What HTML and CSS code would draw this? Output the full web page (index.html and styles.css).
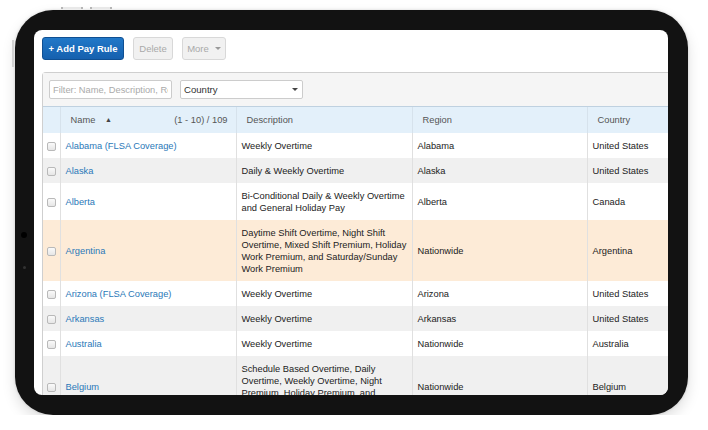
FILE: index.html
```html
<!DOCTYPE html>
<html lang="en">
<head>
<meta charset="utf-8">
<title>Pay Rules</title>
<link rel="stylesheet" href="styles.css">
</head>
<body>
<div class="frame">
  <span class="hw hw-top1"></span>
  <span class="hw hw-top2"></span>
  <span class="hw hw-side"></span>
  <span class="cam cam-lens"></span>
  <span class="cam cam-dot"></span>
  <div class="screen">
    <div class="toolbar">
      <button class="btn btn-primary">+ Add Pay Rule</button>
      <button class="btn btn-disabled btn-delete">Delete</button>
      <button class="btn btn-disabled btn-more">More <span class="caret"></span></button>
    </div>
    <div class="panel">
      <div class="filters">
        <input class="filter-input" type="text" placeholder="Filter: Name, Description, Region">
        <div class="select-wrap">
          <select class="filter-select"><option>Country</option></select>
        </div>
      </div>
      <table class="grid">
        <colgroup>
          <col class="c-check"><col class="c-name"><col class="c-desc"><col class="c-region"><col class="c-country">
        </colgroup>
        <thead>
          <tr>
            <th></th>
            <th><div class="name-head"><span>Name <span class="sort">▲</span></span><span class="count">(1 - 10) / 109</span></div></th>
            <th>Description</th>
            <th>Region</th>
            <th>Country</th>
          </tr>
        </thead>
        <tbody>
          <tr><td><span class="cb"></span></td><td><a href="#">Alabama (FLSA Coverage)</a></td><td>Weekly Overtime</td><td>Alabama</td><td>United States</td></tr>
          <tr class="alt"><td><span class="cb"></span></td><td><a href="#">Alaska</a></td><td>Daily &amp; Weekly Overtime</td><td>Alaska</td><td>United States</td></tr>
          <tr><td><span class="cb"></span></td><td><a href="#">Alberta</a></td><td>Bi-Conditional Daily &amp; Weekly Overtime and General Holiday Pay</td><td>Alberta</td><td>Canada</td></tr>
          <tr class="hl"><td><span class="cb"></span></td><td><a href="#">Argentina</a></td><td>Daytime Shift Overtime, Night Shift Overtime, Mixed Shift Premium, Holiday Work Premium, and Saturday/Sunday Work Premium</td><td>Nationwide</td><td>Argentina</td></tr>
          <tr><td><span class="cb"></span></td><td><a href="#">Arizona (FLSA Coverage)</a></td><td>Weekly Overtime</td><td>Arizona</td><td>United States</td></tr>
          <tr class="alt"><td><span class="cb"></span></td><td><a href="#">Arkansas</a></td><td>Weekly Overtime</td><td>Arkansas</td><td>United States</td></tr>
          <tr><td><span class="cb"></span></td><td><a href="#">Australia</a></td><td>Weekly Overtime</td><td>Nationwide</td><td>Australia</td></tr>
          <tr class="alt"><td><span class="cb"></span></td><td><a href="#">Belgium</a></td><td>Schedule Based Overtime, Daily Overtime, Weekly Overtime, Night Premium, Holiday Premium, and Saturday/Sunday Work Premium</td><td>Nationwide</td><td>Belgium</td></tr>
        </tbody>
      </table>
    </div>
  </div>
</div>
</body>
</html>
```

FILE: styles.css
```css
* { box-sizing: border-box; }

html, body {
  margin: 0;
  padding: 0;
  background: #ffffff;
}

body {
  font-family: "Liberation Sans", Arial, sans-serif;
  font-size: 9.3px;
  color: #222;
  padding: 10px 0 0 15px;
}

.frame {
  position: relative;
  width: 673px;
  height: 405px;
  background: #121212;
  border-radius: 38px;
  padding: 20px 20px 20px 19px;
  box-shadow: 0 6px 14px rgba(0, 0, 0, 0.13), 0 0 3px rgba(0, 0, 0, 0.15);
}

.hw {
  position: absolute;
}
.hw-top1 { left: 46px; top: -3px; width: 22px; height: 2px; background: #e8e8e8; border-left: 2px solid #b5b5b5; border-right: 2px solid #b5b5b5; }
.hw-top2 { left: 75px; top: -3px; width: 22px; height: 2px; background: #e8e8e8; border-left: 2px solid #b5b5b5; border-right: 2px solid #b5b5b5; }
.hw-side { left: -3px; top: 30px; width: 2px; height: 27px; background: #d2d2d2; }

.cam {
  position: absolute;
  border-radius: 50%;
}
.cam-lens { left: 6px; top: 222px; width: 6px; height: 6px; background: #000; }
.cam-dot { left: 8px; top: 256px; width: 3px; height: 3px; background: #333; }

.screen {
  width: 634px;
  height: 365px;
  background: #ffffff;
  border-radius: 8px;
  overflow: hidden;
  padding: 7px 0 0 8px;
}

.toolbar {
  display: flex;
  gap: 9px;
  height: 23px;
}

.btn {
  font-family: "Liberation Sans", Arial, sans-serif;
  font-size: 9.5px;
  height: 23px;
  border-radius: 3px;
  padding: 0;
  display: flex;
  align-items: center;
  justify-content: center;
}

.btn-primary {
  width: 82px;
  color: #fff;
  font-weight: bold;
  background: linear-gradient(#2178c8, #1560ae);
  border: 1px solid #0f4f92;
}

.btn-disabled {
  color: #a9a9a9;
  background: #f1f1f1;
  border: 1px solid #d8d8d8;
}
.btn-delete { width: 40px; }
.btn-more { width: 44px; gap: 6px; }

.caret {
  display: inline-block;
  width: 0;
  height: 0;
  border-left: 3px solid transparent;
  border-right: 3px solid transparent;
  border-top: 3px solid #999;
}

.panel {
  margin-top: 12px;
  width: 740px;
  border: 1px solid #cfcfcf;
  border-right: none;
  border-radius: 4px 0 0 0;
}

.filters {
  background: #f5f5f5;
  height: 34px;
  display: flex;
  align-items: center;
  gap: 8px;
  padding-left: 6px;
  border-bottom: 1px solid #bfd1e0;
}

.filter-input {
  width: 123px;
  height: 19px;
  background: #fff;
  border: 1px solid #ccc;
  border-radius: 2px;
  padding: 0 3px;
  margin: 0;
  font-family: "Liberation Sans", Arial, sans-serif;
  font-size: 9.3px;
  color: #333;
  outline: none;
}
.filter-input::placeholder { color: #aaa; }

.select-wrap {
  position: relative;
  width: 123px;
  height: 19px;
}
.select-wrap::after {
  content: "";
  position: absolute;
  right: 5px;
  top: 8px;
  border-left: 3px solid transparent;
  border-right: 3px solid transparent;
  border-top: 3px solid #444;
  pointer-events: none;
}

.filter-select {
  appearance: none;
  -webkit-appearance: none;
  width: 123px;
  height: 19px;
  margin: 0;
  background: #fff;
  border: 1px solid #ccc;
  border-radius: 2px;
  padding: 0 0 0 3px;
  font-family: "Liberation Sans", Arial, sans-serif;
  font-size: 9.6px;
  color: #333;
  outline: none;
}

.grid {
  border-collapse: collapse;
  table-layout: fixed;
  width: 740px;
}

.c-check { width: 17px; }
.c-name { width: 176px; }
.c-desc { width: 176px; }
.c-region { width: 175px; }
.c-country { width: 196px; }

.grid th {
  background: #e3f0fa;
  color: #555;
  font-weight: normal;
  text-align: left;
  height: 26px;
  padding: 0 8px 0 10px;
  border-left: 1px solid #d6e2ec;
}

.grid th:first-child, .grid td:first-child {
  border-left: none;
  padding: 0;
  text-align: center;
}

.name-head {
  display: flex;
  justify-content: space-between;
}

.sort {
  font-size: 7px;
  margin-left: 7px;
  color: #444;
  vertical-align: 1px;
}

.count { color: #555; }

.grid td {
  padding: 6.5px 3px 6.5px 5px;
  line-height: 12px;
  vertical-align: middle;
  border-left: 1px solid #e0e0e0;
}

.grid tr.alt td { background: #f0f0f0; }
.grid tr.hl td { background: #fdebd7; }

.grid a {
  color: #2a78b8;
  text-decoration: none;
}

.cb {
  display: inline-block;
  width: 9px;
  height: 9px;
  border: 1px solid #b9b9b9;
  border-radius: 2px;
  background: linear-gradient(#fafafa, #e6e6e6);
  vertical-align: middle;
}
```
